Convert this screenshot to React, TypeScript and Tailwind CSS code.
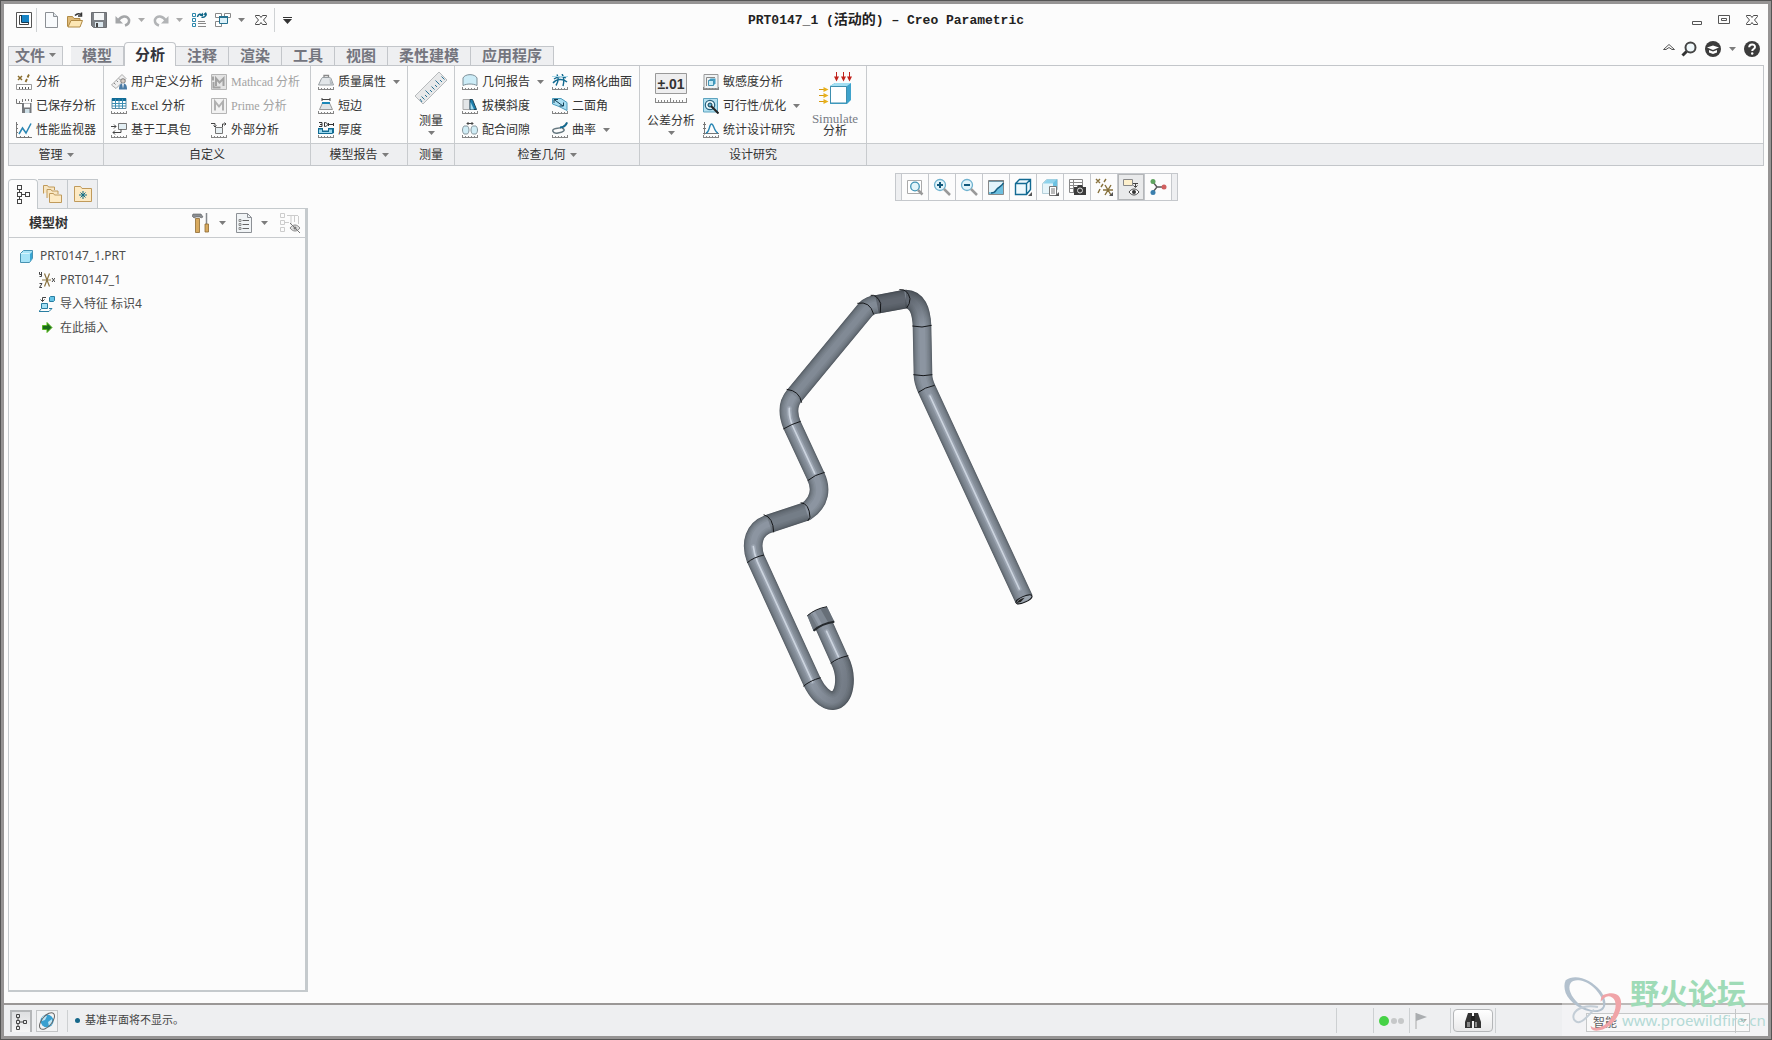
import type { ReactNode } from "react";

interface IconProps {
  children: ReactNode;
  className?: string;
  box?: string;
}

function Icon({ children, className = "h-4 w-4", box = "0 0 16 16" }: IconProps) {
  return (
    <svg viewBox={box} className={`shrink-0 ${className}`} fill="none" aria-hidden="true">
      {children}
    </svg>
  );
}

function Caret({ className = "text-[#7c7c7c]" }: { className?: string }) {
  return (
    <svg viewBox="0 0 7 4" className={`h-1 w-[7px] shrink-0 ${className}`} aria-hidden="true">
      <path d="M0 0h7L3.500 4z" fill="currentColor" />
    </svg>
  );
}

function Scale() {
  return (
    <path
      d="M.5 13v2.500h15V13M3.500 14v2M6.500 14v2M9.500 14v2M12.500 14v2"
      stroke="#858585"
      shapeRendering="crispEdges"
    />
  );
}

/* ---------- quick access ---------- */

const AppIcon = () => (
  <Icon>
    <path d="M.5.5h15v15H.5z" fill="#fff" stroke="#555" />
    <path d="M3.500 3.500h9v9h-9z" fill="#fff" stroke="#444" />
    <path d="M5 3h8v7H5z" fill="#1583c4" />
    <path d="M5.500 3v7.500H13" stroke="#123a55" />
  </Icon>
);
const NewIcon = () => (
  <Icon>
    <path d="M1.500.5h8l4 4v11h-12z" fill="#f8fafc" stroke="#8b8f94" />
    <path d="M9.500.5v4h4" fill="#dfe5ea" stroke="#8b8f94" />
  </Icon>
);
const OpenIcon = () => (
  <Icon>
    <path d="M.5 14.500v-10h5l1.500 2h6v3" fill="#e0bb78" stroke="#b08a45" />
    <path d="M1 15l3-6.500h11.500l-2.500 6.500z" fill="#fde7b4" stroke="#b08a45" />
    <path d="M8 3.500q3-3 6-1M14.500.5v3.500H11" stroke="#333" strokeWidth="1.500" />
  </Icon>
);
const SaveIcon = () => (
  <Icon>
    <path d="M.5.5h15v15h-13l-2-2z" fill="#7d8186" stroke="#6c6f73" />
    <path d="M3 1h10v7H3z" fill="#f5f7f8" />
    <path d="M4 10h8v5H4z" fill="#dbe7ee" />
    <path d="M5 11h2v4H5z" fill="#444" />
  </Icon>
);
const UndoIcon = () => (
  <Icon>
    <path d="M3 9c3-5.500 9-6 11-1.500.5 3-1 5-4 6" stroke="#a4a6a8" strokeWidth="2.500" />
    <path d="M.5 4v7.500H8z" fill="#a4a6a8" />
  </Icon>
);
const RedoIcon = () => (
  <Icon>
    <path d="M13 9C10 3.500 4 3 2 7.500c-.5 3 1 5 4 6" stroke="#b2b4b6" strokeWidth="2.500" />
    <path d="M15.500 4v7.500H8z" fill="#b2b4b6" />
  </Icon>
);
const RegenIcon = () => (
  <Icon>
    <path d="M1.500 1.500h3v3h-3zM1.500 6.500h3v3h-3zM1.500 11.500h3v3h-3z" stroke="#2b87ab" />
    <path d="M7 9.500h7M7 11.500h8M7 14.500h8" stroke="#888" />
    <path d="M6.500 5C7 2 9.500 1.500 11 3M15 1.500c0 3-2 4.500-4.500 3.500" stroke="#0f6688" strokeWidth="1.500" />
    <path d="M8.500 4h3.500V.5zM12 2.500l3-2.500 1 3.500z" fill="#0f6688" />
  </Icon>
);
const WindowsIcon = () => (
  <Icon>
    <path d="M.5 1.500h6v4h-6zM9.500 1.500h6v4h-6zM.5 9.500h6v5h-6z" fill="#fff" stroke="#888" />
    <path d="M4.500 4.500h8v7h-8z" fill="#dcf1f9" stroke="#26718f" />
    <path d="M4 5h9" stroke="#26718f" strokeWidth="2" />
  </Icon>
);
const OutlineX = () => (
  <Icon className="h-3 w-3" box="0 0 12 12">
    <path
      d="M.5 1.500h4L6 3.500l1.500-2h4v1L8.500 6l3 3.500v1h-4L6 8.500l-1.500 2h-4v-1l3-3.500-3-3.500z"
      stroke="#4b4b4b"
    />
  </Icon>
);

function QuickAccess() {
  return (
    <div className="flex items-center pl-3">
      <button aria-label="窗口"><AppIcon /></button>
      <span className="ml-1 h-6 w-px bg-[#cfd2d4]" />
      <button aria-label="新建" className="ml-[7px]"><NewIcon /></button>
      <button aria-label="打开" className="ml-[7px]"><OpenIcon /></button>
      <button aria-label="保存" className="ml-2"><SaveIcon /></button>
      <button aria-label="撤消" className="ml-2 flex items-center gap-[7px]"><UndoIcon /><Caret className="text-[#aaa]" /></button>
      <button aria-label="重做" className="ml-2 flex items-center gap-[7px]"><RedoIcon /><Caret className="text-[#aaa]" /></button>
      <button aria-label="重新生成" className="ml-2"><RegenIcon /></button>
      <button aria-label="窗口列表" className="ml-2 flex items-center gap-[7px]"><WindowsIcon /><Caret /></button>
      <button aria-label="关闭文件" className="ml-[10px]"><OutlineX /></button>
      <span className="ml-[7px] h-6 w-px bg-[#cfd2d4]" />
      <button aria-label="自定义工具栏" className="ml-2">
        <Icon className="h-[7px] w-[9px]" box="0 0 9 7">
          <path d="M0 .5h9" stroke="#333" />
          <path d="M0 2h9L4.500 7z" fill="#333" />
        </Icon>
      </button>
    </div>
  );
}

function TitleBar() {
  return (
    <header className="grid h-8 grid-cols-[1fr_auto_1fr] items-center">
      <QuickAccess />
      <h1 className="font-['Liberation_Mono','Noto_Sans_CJK_SC',monospace] text-[13px] font-bold whitespace-pre text-[#222]">
        PRT0147_1 (<span className="text-sm">活动的</span>) – Creo Parametric
      </h1>
      <div className="flex items-center justify-end gap-4 pr-[10px]">
        <button aria-label="最小化">
          <Icon className="h-3 w-[10px]" box="0 0 10 12"><path d="M.5 7.500h9v3h-9z" stroke="#555" /></Icon>
        </button>
        <button aria-label="最大化">
          <Icon className="h-3 w-3" box="0 0 12 12">
            <path d="M.5 1.500h11v8H.5zM3.500 4.500h5v2h-5z" stroke="#555" />
          </Icon>
        </button>
        <button aria-label="关闭"><OutlineX /></button>
      </div>
    </header>
  );
}

const tabs = ["模型", "分析", "注释", "渲染", "工具", "视图", "柔性建模", "应用程序"];

function TabBar() {
  return (
    <div className="flex h-[29px] items-end justify-between pl-1">
      <nav className="flex items-end text-[15px] leading-4 font-bold text-[#74757e]">
        <button className="mr-2 flex h-[19px] w-[55px] items-center justify-center gap-1 border border-b-0 border-[#c3c6ca] bg-[#eeeff1] pb-[2px]">
          文件 <Caret />
        </button>
        {tabs.map((tab) => (
          <button
            key={tab}
            className={
              tab === "分析"
                ? "relative -mb-px h-6 rounded-t-sm border border-b-0 border-[#c3c6ca] bg-[#fcfcfc] px-[10px] pb-[2px] text-[#33333b]"
                : "h-[19px] border-t border-r border-[#c3c6ca] bg-[#eeeff1] px-[11px] pb-[2px]"
            }
          >
            {tab}
          </button>
        ))}
      </nav>
      <div className="flex items-center gap-2 pr-2 pb-2">
        <button aria-label="最小化功能区" className="-mr-[2px]">
          <Icon className="h-3 w-3" box="0 0 12 12">
            <path d="M.5 6.500L6 1.500l5.500 5H9L6 4.500l-3 2z" stroke="#555" />
          </Icon>
        </button>
        <button aria-label="搜索">
          <Icon>
            <circle cx="9.500" cy="6.500" r="5" fill="#f0f8fb" stroke="#444" strokeWidth="2" />
            <path d="M5.500 10.500l-4 4" stroke="#333" strokeWidth="3" />
          </Icon>
        </button>
        <button aria-label="学习" className="flex items-center gap-2">
          <Icon>
            <circle cx="8" cy="8" r="8" fill="#3c3c3c" />
            <path d="M2 6.500L8 4.500l6 2L8 9zM4 9l4 1.500L12 9v2.500L8 13l-4-1.500z" fill="#fff" />
          </Icon>
          <Caret />
        </button>
        <button aria-label="帮助">
          <Icon>
            <circle cx="8" cy="8" r="8" fill="#3c3c3c" />
            <path d="M5.200 6.200C5.200 2.500 11 2.600 11 6c0 2-2.800 2-2.800 4" stroke="#fff" strokeWidth="2" />
            <circle cx="8.200" cy="12.500" r="1.200" fill="#fff" />
          </Icon>
        </button>
      </div>
    </div>
  );
}

/* ---------- ribbon icons ---------- */

const AnalysisIcon = () => (
  <Icon>
    <path d="M2 2l4 4M6 2L2 6" stroke="#8a6d2d" strokeWidth="1.500" />
    <path d="M13 .5l-1.500 3M11 5l-1.500 3" stroke="#8a6d2d" strokeWidth="1.800" />
    <path d="M.5 10.500h15v5H.5z" fill="#fff" stroke="#999" />
    <path d="M3.500 13v2M6.500 13v2M9.500 13v2M12.500 13v2" stroke="#555" />
  </Icon>
);
const SavedIcon = () => (
  <Icon>
    <path d="M.5 1v4.500H6M3.500 3v2M6.500 1v3M9.500 1v2M12.500 1v2M15.500 1v3" stroke="#777" />
    <path d="M6 5h9.500v10H6z" fill="#76797d" />
    <path d="M8 5.500h6v4H8z" fill="#fff" />
    <path d="M9 11h4.500v4H9z" fill="#cfe0e8" />
  </Icon>
);
const MonitorIcon = () => (
  <Icon>
    <path d="M.5 0v15.500H16M2 2.500h-1M2 6.500h-1M2 10.500h-1M4.500 14v1M8.500 14v1M12.500 14v1" stroke="#777" />
    <path d="M3 12l3.500-6 3.500 5L15 1.500" stroke="#2a86b4" strokeWidth="1.500" />
  </Icon>
);
const UserIcon = () => (
  <Icon>
    <path d="M.5 11L11 .5 15 4.500 5 14.500z" fill="#efefef" stroke="#aaa" />
    <path d="M3 9l1.500 1.500M5.500 6.500L7 8M8 4.500l1.500 1.500" stroke="#888" />
    <circle cx="12" cy="7" r="2.300" fill="#d8cdc4" stroke="#666" strokeWidth=".8" />
    <path d="M8 15.500c0-4 1-6 4-6s4 2 4 6z" fill="#4a7ba5" />
    <path d="M11 9.500h2l-1 5z" fill="#fff" />
  </Icon>
);
const ExcelIcon = () => (
  <Icon>
    <path d="M1 .5h14v10H1z" fill="#fff" stroke="#5c8ca5" />
    <path d="M1 0h14v3H1z" fill="#0f6b96" />
    <path d="M1 5.500h14M1 8h14M4.500 1v9.500M8 1v9.500M11.500 1v9.500" stroke="#3b8db2" />
    <Scale />
  </Icon>
);
const ToolkitIcon = () => (
  <Icon>
    <path d="M7.500 1.500h8v6h-8z" fill="#e3eef3" stroke="#777" />
    <path d="M5 4.500H0M10 10.500H2M3 2.500l2 2-2 2M4 8.500l-2 2 2 2M10 10.500v-3" stroke="#444" />
    <Scale />
  </Icon>
);
const MathcadIcon = () => (
  <Icon>
    <path d="M.5.5h15v15H.5z" fill="#e4e4e4" stroke="#b5b5b5" />
    <path d="M2 2.500v4M5 12V4.500l3.500 4 4-4V12M2.500 8v5.500h7" stroke="#a2a2a2" strokeWidth="2" />
  </Icon>
);
const PrimeIcon = () => (
  <Icon>
    <path d="M.5.5h15v15H.5z" fill="#f2f2f2" stroke="#b5b5b5" />
    <path d="M4 12.500v-9l4 5 4-5v9" stroke="#b0b0b0" strokeWidth="2" />
  </Icon>
);
const ExternalIcon = () => (
  <Icon>
    <path d="M4.500 5.500h7v6h-7z" fill="#e8f0f3" stroke="#777" />
    <path d="M0 1.500h4v3M2.500 3.500l1.500 1.500L5.500 3.500M11.500 5V2H15M13.500.5L15 2l-1.500 1.500" stroke="#444" />
    <Scale />
  </Icon>
);
const MassIcon = () => (
  <Icon>
    <path d="M6 4V1.500h4.500V4" stroke="#888" strokeWidth="1.300" />
    <path d="M3.500 4.500Q4 3.500 5 3.500h6.500q1 0 1.500 1l2.500 6.500H.5z" fill="#e2e6e9" stroke="#979da1" />
    <path d="M11.500 4l3.500 6.500h-3z" fill="#b4bbc0" />
    <Scale />
  </Icon>
);
const ShortEdgeIcon = () => (
  <Icon>
    <path d="M4 1.500h8M4 0v3M12 0v3" stroke="#444" />
    <path d="M4.500 5h7l3 6.500h-13z" fill="#dfe4e7" stroke="#999" />
    <path d="M4 5h8" stroke="#1a87b8" strokeWidth="2" />
    <Scale />
  </Icon>
);
const ThicknessIcon = () => (
  <Icon>
    <path d="M1 .5h3v4H1M2 2.500h2M6.500.5v4c4 0 4-4 0-4M10 2.500h6M10.500 1v3M15.500 1v3" stroke="#333" />
    <path d="M0 6h5v2.500h5V6h6v5l-2 1H0z" fill="#116a92" />
    <path d="M1 7.500h3V10h7V7.500h3V11H1z" fill="#9cd8ee" />
    <Scale />
  </Icon>
);
const GeometryIcon = () => (
  <Icon>
    <path d="M1 11.500V4c2-4.500 12-4.500 14 0v7.500C11 9.500 5 9.500 1 11.500z" fill="#ccecf7" stroke="#7c8f98" />
    <Scale />
  </Icon>
);
const DraftIcon = () => (
  <Icon>
    <path d="M1 1.500h7v10H1z" fill="#e3e6e8" stroke="#aaa" />
    <path d="M8 1.500h2.500l4 10H8z" fill="#1b7fae" stroke="#1d4558" />
    <path d="M8.500 4v7.500H12z" fill="#a5dcef" />
    <Scale />
  </Icon>
);
const ClearanceIcon = () => (
  <Icon>
    <path d="M5 1.500h6M6.500 0L5 1.500 6.500 3M9.500 0L11 1.500 9.500 3" stroke="#444" />
    <path d="M5.500 4c2 2 2 6 0 8H2C0 10 0 6 2 4zM10.500 4c-2 2-2 6 0 8H14c2-2 2-6 0-8z" fill="#d0edf6" stroke="#87979e" />
    <Scale />
  </Icon>
);
const MeshIcon = () => (
  <Icon>
    <path d="M1 9c3-4 10-5 14-1M2 5c4-3 9-3 12-1M5 .5c2 4 1 8-1 11M10 0c3 4 2 8 1 12" stroke="#136a90" strokeWidth="1.400" />
    <path d="M0 2.500h16" stroke="#a9d8e9" />
    <Scale />
  </Icon>
);
const DihedralIcon = () => (
  <Icon>
    <path d="M.5.5H9l6 4v8L7 8.500.5 6z" fill="#a9def2" stroke="#4c9abb" />
    <path d="M2 1.500l9 6.500M2 5V1.500h4M7.500 8h4V4.500" stroke="#123f55" />
    <Scale />
  </Icon>
);
const CurvatureIcon = () => (
  <Icon>
    <path d="M15 .5C13 5 9 6 4 6.500S0 12 6 11s8-3 4-5" stroke="#65777f" strokeWidth="1.500" />
    <path d="M8 5.500c4 0 6-2 7-5" stroke="#126a92" strokeWidth="2" />
    <Scale />
  </Icon>
);
const SensitivityIcon = () => (
  <Icon>
    <path d="M1 .5h14v14H1z" fill="#f1f4f5" stroke="#999" />
    <path d="M3.500 12V3.500H12" stroke="#888" />
    <path d="M5.500 6.500l2-2h5v5l-2 2h-5z" fill="#3f9dc4" />
    <path d="M5.500 6.500h5v5h-5z" fill="#c6ebf6" stroke="#4393b4" />
    <Scale />
  </Icon>
);
const FeasibilityIcon = () => (
  <Icon>
    <path d="M.5.5h14v13.500H.5z" fill="#b4e1f1" stroke="#5da3bf" />
    <circle cx="7" cy="7" r="4.700" fill="#e9f7fb" stroke="#28627f" strokeWidth="1.200" />
    <circle cx="7" cy="7" r="2" fill="#5fb0d0" stroke="#123f55" />
    <path d="M8 8l7.500 7.500" stroke="#222" strokeWidth="2" />
  </Icon>
);
const StatisticsIcon = () => (
  <Icon>
    <path d="M1.500 0v12.500M0 2.500h3M0 6.500h3M0 11.500h16" stroke="#777" />
    <path d="M3 11c4-1 3-9 5.500-9S11 10 15 11" stroke="#2a86b4" strokeWidth="1.400" />
    <Scale />
  </Icon>
);
const MeasureIcon = () => (
  <Icon className="h-8 w-8" box="0 0 32 32">
    <path d="M0 24L24 0l8 8L8 32z" fill="#e8e9ea" stroke="#b7babc" />
    <path
      d="M7 30l-2-3M9.500 27.500l-3-3M12 25l-2-2M14.500 22.500l-4-4M17 20l-2-2M19.500 17.500l-3-3M22 15l-2-2M24.500 12.500l-4-4M27 10l-2-2M29.500 7.500l-3-3"
      stroke="#2c7396"
    />
  </Icon>
);
const ToleranceIcon = () => (
  <Icon className="h-8 w-8" box="0 0 32 32">
    <path d="M.5 1.500h31v20H.5z" fill="#eeeeef" stroke="#999" />
    <text x="16" y="17" textAnchor="middle" fontSize="14" fontWeight="700" fill="#333" fontFamily="Liberation Sans">
      ±.01
    </text>
    <path
      d="M.5 26v4.500h31V26M3.500 28v2M6.500 28v2M9.500 28v2M12.500 28v2M15.500 26v4M18.500 28v2M21.500 28v2M24.500 28v2M27.500 28v2"
      stroke="#888"
      shapeRendering="crispEdges"
    />
  </Icon>
);
const SimulateIcon = () => (
  <Icon className="h-8 w-[34px]" box="0 0 34 32">
    <path d="M12 14l5-3h16v17l-4 4H12z" fill="#3fa3cc" />
    <path d="M12 14l5-3h16l-4 3z" fill="#a4dff2" />
    <path d="M12.500 14.500h16v16.500h-16z" fill="#fff" stroke="#3f8fae" />
    <path d="M18.500 0v6M25.500 0v6M31.500 0v6" stroke="#c1231c" />
    <path d="M16 4.500h5l-2.500 5zM23 4.500h5l-2.500 5zM29 4.500h5l-2.500 5z" fill="#c1231c" />
    <path d="M1 17.500h6M1 23.500h6M1 29.500h6" stroke="#d59a10" />
    <path d="M5.500 15v5l5-2.500zM5.500 21v5l5-2.500zM5.500 27v5l5-2.500z" fill="#e8b01c" />
  </Icon>
);

/* ---------- ribbon ---------- */

interface CommandProps {
  icon: ReactNode;
  label: string;
  menu?: boolean;
  disabled?: boolean;
}

function Command({ icon, label, menu, disabled }: CommandProps) {
  return (
    <button
      disabled={disabled}
      className="flex h-6 items-center gap-1 text-xs whitespace-nowrap text-[#333] disabled:text-[#a3a3a3]"
    >
      {icon}
      <span>{label}</span>
      {menu && <Caret className="ml-[3px] text-[#7c7c7c]" />}
    </button>
  );
}

function BigCommand({ icon, children, menu }: { icon: ReactNode; children: ReactNode; menu?: boolean }) {
  return (
    <button className="flex h-full w-12 flex-col items-center pt-[2px] text-xs leading-3 whitespace-nowrap text-[#333]">
      {icon}
      <span className={menu ? "mt-[11px]" : "mt-[9px]"}>{children}</span>
      {menu && <Caret className="mt-1 text-[#7c7c7c]" />}
    </button>
  );
}

function Group({ label, menu, width, children }: { label: string; menu?: boolean; width: string; children: ReactNode }) {
  return (
    <section className={`flex shrink-0 flex-col border-r border-[#c8cbce] ${width}`}>
      <div className="flex h-[77px] gap-2 pt-1 pl-[7px]">{children}</div>
      <div className="flex h-[22px] items-center justify-center gap-1 border-t border-[#c8cbce] bg-[#eeeff1] text-xs text-[#333]">
        {label}
        {menu && <Caret />}
      </div>
    </section>
  );
}

function Ribbon() {
  return (
    <div className="mr-1 ml-1 flex border border-[#c3c6ca] font-['Liberation_Serif','Noto_Sans_CJK_SC',sans-serif]">
      <Group label="管理" menu width="w-[95px]">
        <div>
          <Command icon={<AnalysisIcon />} label="分析" />
          <Command icon={<SavedIcon />} label="已保存分析" />
          <Command icon={<MonitorIcon />} label="性能监视器" />
        </div>
      </Group>
      <Group label="自定义" width="w-[207px]">
        <div className="w-[92px]">
          <Command icon={<UserIcon />} label="用户定义分析" />
          <Command icon={<ExcelIcon />} label="Excel 分析" />
          <Command icon={<ToolkitIcon />} label="基于工具包" />
        </div>
        <div>
          <Command icon={<MathcadIcon />} label="Mathcad 分析" disabled />
          <Command icon={<PrimeIcon />} label="Prime 分析" disabled />
          <Command icon={<ExternalIcon />} label="外部分析" />
        </div>
      </Group>
      <Group label="模型报告" menu width="w-[97px]">
        <div>
          <Command icon={<MassIcon />} label="质量属性" menu />
          <Command icon={<ShortEdgeIcon />} label="短边" />
          <Command icon={<ThicknessIcon />} label="厚度" />
        </div>
      </Group>
      <Group label="测量" width="w-[47px]">
        <div className="-ml-[7px] flex w-[46px] justify-center">
          <BigCommand icon={<MeasureIcon />} menu>测量</BigCommand>
        </div>
      </Group>
      <Group label="检查几何" menu width="w-[185px]">
        <div className="w-[82px]">
          <Command icon={<GeometryIcon />} label="几何报告" menu />
          <Command icon={<DraftIcon />} label="拔模斜度" />
          <Command icon={<ClearanceIcon />} label="配合间隙" />
        </div>
        <div>
          <Command icon={<MeshIcon />} label="网格化曲面" />
          <Command icon={<DihedralIcon />} label="二面角" />
          <Command icon={<CurvatureIcon />} label="曲率" menu />
        </div>
      </Group>
      <Group label="设计研究" width="w-[227px]">
        <BigCommand icon={<ToleranceIcon />} menu>公差分析</BigCommand>
        <div className="w-[100px]">
          <Command icon={<SensitivityIcon />} label="敏感度分析" />
          <Command icon={<FeasibilityIcon />} label="可行性/优化" menu />
          <Command icon={<StatisticsIcon />} label="统计设计研究" />
        </div>
        <BigCommand icon={<SimulateIcon />}>
          <span className="text-[13px] text-[#777b84]">Simulate</span>
          <br />
          分析
        </BigCommand>
      </Group>
      <div className="flex flex-1 flex-col justify-end">
        <div className="h-[22px] border-t border-[#c8cbce] bg-[#eeeff1]" />
      </div>
    </div>
  );
}

/* ---------- model tree ---------- */

function TreeGlyph() {
  return (
    <Icon className="h-[19px] w-[13px]" box="0 0 13 19">
      <path
        d="M.5.5h4v4h-4zM.5 7.500h4v4h-4zM.5 14.500h4v4h-4zM8.500 7.500h4v4h-4zM2.500 5v2M2.500 12v2M5 9.500h3"
        stroke="#444"
        shapeRendering="crispEdges"
      />
    </Icon>
  );
}

const FoldersIcon = () => (
  <Icon className="h-5 w-5" box="0 0 20 20">
    <path d="M.5 9.500v-8h4l1 1.500h6v3M4 14V5.500h4L9 7h6v3" fill="#f8e6c2" stroke="#c09a5b" />
    <path d="M6.500 18.500v-9h4l1 1.500h7v7.500z" fill="#fdeac4" stroke="#c09a5b" />
  </Icon>
);
const FavoriteIcon = () => (
  <Icon className="h-4 w-[18px]" box="0 0 18 16">
    <path d="M.5 15.500V.5h6l1.500 2h9.500v13z" fill="#fdeac4" stroke="#c09a5b" />
    <path d="M9 5v8M5 9h8M6.500 6.500l5 5M11.500 6.500l-5 5" stroke="#126c86" />
  </Icon>
);
const ToolsIcon = () => (
  <Icon className="h-5 w-[18px]" box="0 0 18 20">
    <path d="M1 1h8l2 3-2 1-1-1H4L2 5 0 3z" fill="#8a8d91" stroke="#5d6063" strokeWidth=".6" />
    <path d="M3.500 5.500h4v14h-4z" fill="#d8aa5f" stroke="#8e6b32" strokeWidth=".8" />
    <path d="M14.500 0v11" stroke="#85898d" strokeWidth="1.500" />
    <path d="M13 11h3.500v8H13z" fill="#d8aa5f" stroke="#8e6b32" strokeWidth=".8" />
  </Icon>
);
const ListIcon = () => (
  <Icon className="h-5 w-4" box="0 0 16 20">
    <path d="M.5.5h11l4 4v15H.5z" fill="#f1f4f6" stroke="#8d9196" />
    <path d="M11.500.5v4h4" stroke="#8d9196" />
    <path d="M6.500 7.500H13M6.500 11.500H13M6.500 15.500H13" stroke="#666" />
    <path d="M3 6.500h2v2H3zM3 10.500h2v2H3zM3 14.500h2v2H3z" stroke="#777" strokeWidth=".8" />
  </Icon>
);
const HiddenIcon = () => (
  <Icon className="h-5 w-5" box="0 0 20 20">
    <path d="M.5.5h4v4h-4zM.5 7.500h4v4h-4zM.5 14.500h4v4h-4zM5 9.500h4M7 2.500h4v9M11 2.500h7M14.500 3v6M18.500 3v8" stroke="#ccc" />
    <path d="M10 15c3-4 7-4 10 0-3 4-7 4-10 0z" fill="#ddd" stroke="#888" />
    <circle cx="15" cy="15" r="1.500" fill="#777" />
    <path d="M10 10l10 10" stroke="#777" />
  </Icon>
);
const PartIcon = () => (
  <Icon className="h-[13px] w-[13px]" box="0 0 13 13">
    <path d="M.5 3.500l3-3h9v8l-3 4h-9z" fill="#a6e3f7" stroke="#4792b2" />
    <path d="M10 4l2-2v6.500l-2 3z" fill="#38a5d2" />
    <path d="M1 3.500h8.500" stroke="#d6f3fc" />
  </Icon>
);
const CsysIcon = () => (
  <Icon>
    <path d="M3 8h9M5.500 1.500l5 13M10.500 1.500l-5 13" stroke="#8b7440" strokeWidth="1.200" />
    <path d="M.5 0v2.500h2V0M2.500 2v2.500H.5M.5 11.500h2.500l-2.500 4H3M13 6l3 4M16 6l-3 4" stroke="#444" />
  </Icon>
);
const ImportIcon = () => (
  <Icon>
    <path d="M10.500 1.500l1-1h4v4l-1 1h-4z" fill="#67c4e6" stroke="#287da1" />
    <path d="M7 1.500H3.500v4M1.500 3.500l2 2 2-2" stroke="#444" />
    <path d="M2.500 7.500h6v5h-6z" fill="#a5e0f4" stroke="#287da1" />
    <path d="M0 15.500l2-2.500M0 15.500h10l3-3h-3" stroke="#287da1" />
  </Icon>
);
const InsertIcon = () => (
  <Icon>
    <path d="M3.500 5.500H8V2.500l5 5-5 5V9.500H3.500z" fill="#1b6d1b" stroke="#57b81d" />
  </Icon>
);

function ModelTree() {
  return (
    <aside className="ml-1 flex w-[300px] shrink-0 flex-col pt-[13px] pb-[11px]">
      <div className="flex h-[29px]">
        <button aria-label="模型树" className="relative z-10 -mb-px flex w-[30px] items-center justify-center rounded-t-sm border border-b-0 border-[#c3c8cc] bg-[#fcfcfc]">
          <TreeGlyph />
        </button>
        <button aria-label="文件夹浏览器" className="flex w-[30px] items-center justify-center border border-b-0 border-l-0 border-[#c3c8cc] bg-[#eeeff1]">
          <FoldersIcon />
        </button>
        <button aria-label="收藏夹" className="flex w-[30px] items-center justify-center border border-b-0 border-l-0 border-[#c3c8cc] bg-[#eeeff1]">
          <FavoriteIcon />
        </button>
      </div>
      <div className="flex-1 border-t border-r-[3px] border-b-2 border-l border-[#c5cacd]">
        <div className="flex h-[29px] items-center border-b border-[#c8cbce] pr-[5px] pl-5">
          <h2 className="flex-1 text-[13px] font-bold text-[#333]">模型树</h2>
          <button aria-label="设置" className="flex items-center gap-[9px]"><ToolsIcon /><Caret /></button>
          <button aria-label="显示" className="ml-[10px] flex items-center gap-[9px]"><ListIcon /><Caret /></button>
          <button aria-label="隐藏项" className="ml-3"><HiddenIcon /></button>
        </div>
        <ul className="pt-[6px] text-xs text-[#4c4c4c]">
          <li className="flex h-6 items-center gap-[7px] pl-[11px]"><PartIcon />PRT0147_1.PRT</li>
          <li className="flex h-6 items-center gap-[5px] pl-[30px]"><CsysIcon />PRT0147_1</li>
          <li className="flex h-6 items-center gap-[5px] pl-[30px]"><ImportIcon />导入特征 标识4</li>
          <li className="flex h-6 items-center gap-[5px] pl-[30px]"><InsertIcon />在此插入</li>
        </ul>
      </div>
    </aside>
  );
}

/* ---------- graphics area ---------- */

const Corner = () => <path d="M18 14v4h-4z" fill="#555" />;

const viewTools = [
  {
    name: "重新调整",
    art: (
      <>
        <path d="M1.500 2.500h14v13h-14z" fill="#fff" stroke="#aaa" />
        <circle cx="9" cy="8.500" r="4.300" fill="#e2f4fa" stroke="#3f93b5" strokeWidth="1.300" />
        <path d="M12 12l4.500 4.500" stroke="#999" strokeWidth="2.500" />
      </>
    ),
  },
  {
    name: "放大",
    art: (
      <>
        <circle cx="7" cy="7" r="5.500" fill="#e2f4fa" stroke="#6fb2cf" strokeWidth="1.300" />
        <path d="M4 7h6M7 4v6" stroke="#12597c" strokeWidth="2" />
        <path d="M11 11l6 6" stroke="#999" strokeWidth="2.500" />
      </>
    ),
  },
  {
    name: "缩小",
    art: (
      <>
        <circle cx="7" cy="7" r="5.500" fill="#e2f4fa" stroke="#6fb2cf" strokeWidth="1.300" />
        <path d="M4 7h6" stroke="#12597c" strokeWidth="2" />
        <path d="M11 11l6 6" stroke="#999" strokeWidth="2.500" />
      </>
    ),
  },
  {
    name: "重画",
    art: (
      <>
        <path d="M1.500 2.500h15v14h-15z" fill="#6dbfdf" stroke="#888" />
        <path d="M2 4h14C15 8 12 8 10 11c-2 3-4 4-8 3z" fill="#e3f4fa" />
        <path d="M2 3h15" stroke="#777" />
        <path d="M4 15c5 0 4-2 6-4s5-3 6.500-6" stroke="#175f82" strokeWidth="1.500" />
      </>
    ),
  },
  {
    name: "显示样式",
    art: (
      <>
        <path d="M1.500 5.500l4-4h11v10l-4 5h-11zM1.500 5.500h11v11M12.500 5.500l4-4" fill="#eef9fd" stroke="#126a92" strokeWidth="1.400" />
        <Corner />
      </>
    ),
  },
  {
    name: "已保存方向",
    art: (
      <>
        <path d="M1.500 5.500l4-4h11v10l-4 4h-11z" fill="#e6f5fa" stroke="#b5cfd9" />
        <path d="M2 5.500l4-4h10l-4 4z" fill="#8ed3ec" />
        <path d="M12 5l4-4v8h-4z" fill="#6cc2e2" />
        <path d="M8.500 8.500h7v9h-7z" fill="#fff" stroke="#777" />
        <path d="M10 11h4M10 13h4M10 15h4" stroke="#777" />
        <Corner />
      </>
    ),
  },
  {
    name: "视图管理器",
    art: (
      <>
        <path d="M1.500 1.500h13v13h-13zM1.500 4.500h13M1.500 7.500h13M1.500 10.500h13M5.500 1.500v13" fill="#fff" stroke="#888" />
        <path d="M6 9h3l1-2h4l1 2h3v8H6z" fill="#3c3c3c" />
        <circle cx="12" cy="12.500" r="2.500" fill="#3c3c3c" stroke="#ddd" />
      </>
    ),
  },
  {
    name: "基准显示",
    art: (
      <>
        <path d="M1 1l4 4M5 1L1 5M11 1l-2 3M8 6l-2 3M5 11l-2 4M8 12h10M10 7l6 10M16 7l-6 10" stroke="#86703b" strokeWidth="1.400" />
        <Corner />
      </>
    ),
  },
  {
    name: "注释显示",
    art: (
      <>
        <path d="M1.500 1.500h9v6h-9z" fill="#fdf0cc" stroke="#888" />
        <path d="M11 5.500h5M13.500 6v3M11.500 7.500l2 2 2-2" stroke="#444" />
        <path d="M7 14c3-4 7-4 10 0-3 4-7 4-10 0z" fill="#fff" stroke="#444" />
        <circle cx="12" cy="14" r="2" fill="#333" />
      </>
    ),
  },
  {
    name: "旋转中心",
    art: (
      <>
        <path d="M4 4l4 5-4 5M8 9h7" stroke="#555" strokeWidth="1.400" />
        <circle cx="4" cy="3.500" r="2.500" fill="#5fa45f" />
        <circle cx="4" cy="14.500" r="2.500" fill="#3b7fae" />
        <circle cx="15" cy="9" r="2.500" fill="#d06060" />
      </>
    ),
  },
];

function ViewToolbar() {
  return (
    <div className="mx-auto flex h-7 w-fit border border-[#c5c8cc] bg-[#eeeff1] px-[5px]">
      {viewTools.map((tool) => (
        <button
          key={tool.name}
          aria-label={tool.name}
          className={`flex w-[27px] items-center justify-center border-l border-[#c5c8cc] last:w-7 last:border-r ${
            tool.name === "注释显示" ? "bg-[#e9eaeb] shadow-[inset_0_0_0_1px_#b4b6b8]" : "bg-[#fcfcfc]"
          }`}
        >
          <Icon className="h-[18px] w-[18px]" box="0 0 18 18">{tool.art}</Icon>
        </button>
      ))}
    </div>
  );
}

const centerLine =
  "M882 957L590 327Q579 303 579 285L576 138C574 90 560 58 527 57L441 73Q420 75 407 88L193 347C172 372 174 405 186 435L258 590C274 625 272 665 229 694L118 731C72 745 60 790 77 836L246 1205C262 1238 285 1262 308 1262C345 1260 355 1190 328 1138L275 1020";

const tubeLayers = [
  { width: 56, color: "#565d65" },
  { width: 53, color: "#626a72" },
  { width: 48, color: "#6e767f" },
  { width: 42, color: "#767f89" },
  { width: 35, color: "#7e8791" },
  { width: 27, color: "#858e99" },
  { width: 18, color: "#8c95a1" },
];

const highlights =
  "M868 927L600 348M178 385Q176 410 188 438L254 580M70 800Q72 820 82 845L247 1205M325 1130L290 1054";

const seams = [
  "M565 337Q584 322 614 316",
  "M550 284Q580 290 607 284",
  "M547 138Q576 145 605 136",
  "M508 29Q533 26 540 56Q540 72 530 84",
  "M422 46Q440 42 452 70L451 98",
  "M382 70Q420 62 431 103",
  "M170 328Q208 332 215 368",
  "M160 447Q185 432 212 424",
  "M233 602Q254 584 284 577",
  "M212 668Q238 670 240 712L233 723",
  "M101 704Q130 712 131 757",
  "M52 848Q70 832 102 825",
  "M220 1219Q240 1202 272 1193",
  "M302 1150Q322 1134 355 1127",
];

function PipeModel() {
  return (
    <svg viewBox="0 0 960 1320" className="absolute top-[114px] left-[422px] h-[440px] w-[320px]" fill="none" role="img" aria-label="PRT0147_1">
      <defs>
        <linearGradient id="bend" x1="530" y1="57" x2="576" y2="138" gradientUnits="userSpaceOnUse">
          <stop offset="0" stopColor="#33383e" stopOpacity=".5" />
          <stop offset="1" stopColor="#33383e" stopOpacity="0" />
        </linearGradient>
        <linearGradient id="uturn" x1="250" y1="1210" x2="345" y2="1230" gradientUnits="userSpaceOnUse">
          <stop offset="0" stopColor="#33383e" stopOpacity="0" />
          <stop offset="1" stopColor="#33383e" stopOpacity=".28" />
        </linearGradient>
      </defs>
      {tubeLayers.map((layer) => (
        <path key={layer.width} d={centerLine} stroke={layer.color} strokeWidth={layer.width} strokeLinejoin="round" />
      ))}
      <path d="M441 73L527 57" stroke="#33383e" strokeOpacity=".5" strokeWidth="56" />
      <path d="M118 731L229 694" stroke="#3f454c" strokeOpacity=".3" strokeWidth="56" />
      <path d="M193 347L407 88Q420 75 441 73" stroke="#3f454c" strokeOpacity=".14" strokeWidth="56" />
      <path d="M527 57C560 58 574 90 576 138" stroke="url(#bend)" strokeWidth="56" />
      <path d="M246 1205C262 1238 285 1262 308 1262C345 1260 355 1190 328 1138" stroke="url(#uturn)" strokeWidth="56" />
      <path d={highlights} stroke="#a9b3c0" strokeOpacity=".5" strokeWidth="14" strokeLinecap="round" />
      <path d={highlights} stroke="#ccd4df" strokeWidth="5" strokeLinecap="round" />
      <path d="M232 1007Q256 986 291 980L313 1025Q278 1030 251 1054z" fill="#7f8893" />
      <path d="M272 988L291 980L313 1025L296 1030z" fill="#676f78" />
      <path d="M232 1007L240 1001L262 1042L251 1054z" fill="#6e767f" />
      <path d="M250 996L272 1036" stroke="#929ba7" strokeWidth="10" />
      <path d="M232 1007Q256 986 291 980" stroke="#1c1f22" strokeWidth="3" />
      <path d="M251 1052Q275 1030 313 1025" stroke="#24282c" strokeWidth="6" />
      {seams.map((d) => (
        <path key={d} d={d} stroke="#15171a" strokeWidth="3" />
      ))}
      <ellipse cx="882" cy="958" rx="26" ry="9" transform="rotate(-24 882 958)" fill="#9aa3ad" stroke="#15171a" strokeWidth="3" />
      <path d="M858 970Q866 957 884 953L872 966z" fill="#222" />
    </svg>
  );
}

/* ---------- status bar ---------- */

function Divider() {
  return <span className="h-[25px] w-px bg-[#cdd0d2]" />;
}

function StatusBar() {
  return (
    <footer className="flex h-[33px] shrink-0 items-center border-t-2 border-[#9a9796] bg-[#eeeff1]">
      <button aria-label="导航器" className="ml-[6px] flex h-[22px] w-[22px] items-center justify-center border-2 border-b-0 border-[#b4b6b8] bg-gradient-to-b from-[#dedfe1] to-[#f6f6f6]">
        <Icon className="h-4 w-3" box="0 0 12 16">
          <path
            d="M1.500.5h3v3h-3zM1.500 6.500h3v3h-3zM1.500 12.500h3v3h-3zM8.500 6.500h3v3h-3zM3 4v2M3 10v2M5 8h3"
            stroke="#444"
          />
        </Icon>
      </button>
      <button aria-label="浏览器" className="ml-1 flex h-[22px] w-[22px] items-center justify-center border border-[#c3c5c7] bg-[#f2f3f4]">
        <Icon className="h-[18px] w-[18px]" box="0 0 18 18">
          <circle cx="9" cy="9" r="6.500" fill="#3aa0d0" />
          <path d="M4 5q3-3 5-1L7 8 4 9zM10 10l4-3v5l-3 2z" fill="#bfe6f5" />
          <ellipse cx="9" cy="9" rx="10" ry="5" transform="rotate(-50 9 9)" stroke="#666" />
        </Icon>
      </button>
      <span className="mr-[7px] ml-[9px] h-[22px] w-px bg-[#cdd0d2]" />
      <span className="mr-[5px] h-[5px] w-[5px] rounded-full bg-[#15678a]" />
      <p className="flex-1 text-[11px] text-[#444]">基准平面将不显示。</p>
      <Divider />
      <span className="w-9" />
      <Divider />
      <span className="flex w-[35px] items-center gap-[1px] pl-[5px]">
        <i className="mr-px h-[10px] w-[10px] rounded-full bg-[#46d246]" />
        <i className="h-[6px] w-[6px] rounded-full bg-[#c6c8c9]" />
        <i className="h-[6px] w-[6px] rounded-full bg-[#c6c8c9]" />
      </span>
      <Divider />
      <span className="w-10 pl-[5px]">
        <Icon>
          <path d="M1 0v16" stroke="#aaa" />
          <path d="M1 0l11 4-11 4z" fill="#aaadb0" />
        </Icon>
      </span>
      <Divider />
      <button aria-label="查找" className="mx-[2px] flex h-[23px] w-10 items-center justify-center rounded-sm border border-[#b4b6b8] bg-gradient-to-b from-white to-[#e9e9ea]">
        <Icon className="h-[15px] w-4" box="0 0 16 15">
          <path d="M3 0h4v15H0V9zM13 0H9v15h7V9z" fill="#333" />
          <path d="M6 3h4v5H6z" fill="#222" />
          <path d="M2 9h3v5H2zM10 9h2v5h-2z" fill="#888" />
        </Icon>
      </button>
      <Divider />
      <div className="relative mr-[18px] ml-[90px]">
        <select aria-label="过滤器" className="h-[19px] w-[164px] appearance-none border border-[#aaacae] bg-[#f7f7f8] pl-[6px] text-xs leading-4 text-black">
          <option>智能</option>
        </select>
        <span className="pointer-events-none absolute inset-y-0 right-0 flex w-[15px] items-center justify-center border-l border-[#aaacae]">
          <Caret />
        </span>
      </div>
    </footer>
  );
}

function ForumMark() {
  return (
    <div className="pointer-events-none absolute right-0 bottom-0 flex h-[63px] w-[206px] bg-[#fbfdfc]/35">
      <svg viewBox="722 40 183 189" className="h-[63px] w-[61px] shrink-0" fill="none" aria-hidden="true">
        <path
          fillRule="evenodd"
          d="M733 62C760 40 810 58 838 94C862 128 855 158 822 157C780 156 745 128 733 100C728 85 728 72 733 62zM748 70C738 84 748 110 772 132C798 153 835 160 845 140C850 115 820 78 790 66C772 60 755 60 748 70z"
          fill="#b3c1ce"
        />
        <path d="M830 142C800 136 765 142 757 165C752 185 770 190 778 186M778 186C790 182 808 160 818 150" stroke="#c3cdd6" strokeWidth="6" />
        <path d="M845 106C880 92 903 105 899 138C895 175 862 212 825 213C812 212 808 206 808 198C820 212 852 204 872 172C890 142 885 112 862 110C852 110 845 118 838 126C838 118 840 110 845 106z" fill="#f0a4a8" />
      </svg>
      <div className="pt-[3px] whitespace-nowrap">
        <p className="pl-[7px] font-['Noto_Sans_CJK_SC',sans-serif] text-[29px] leading-8 font-bold text-[#9fdbb7]">野火论坛</p>
        <p className="-ml-px text-[15px] leading-6 text-[#b4dad6]">www.proewildfire.cn</p>
      </div>
    </div>
  );
}

export default function App() {
  return (
    <div className="h-screen border border-[#555] font-['Noto_Sans','Noto_Sans_CJK_SC',sans-serif]">
      <div className="relative flex h-full flex-col overflow-hidden border-3 border-[#969494] bg-[#fcfcfc]">
        <TitleBar />
        <TabBar />
        <Ribbon />
        <div className="flex min-h-0 flex-1">
          <ModelTree />
          <main className="relative min-w-0 flex-1 pt-[7px] pr-1">
            <ViewToolbar />
            <PipeModel />
          </main>
        </div>
        <StatusBar />
        <ForumMark />
      </div>
    </div>
  );
}
